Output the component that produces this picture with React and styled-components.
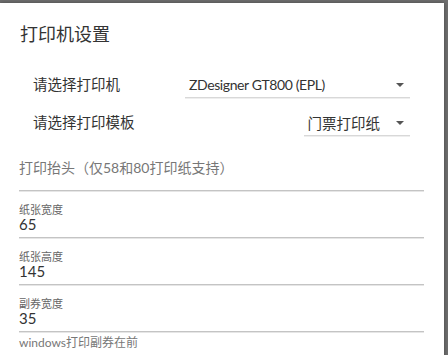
import React from 'react'
import styled, { createGlobalStyle } from 'styled-components'

const Global = createGlobalStyle`
html, body {
  margin: 0;
  padding: 0;
  background: #6e6e6e;
  overflow: hidden;
}
body {
  font-family: "Lato", "Noto Sans CJK SC", sans-serif;
}
`

const Backdrop = styled.div`
width: 448px;
height: 355px;
padding-top: 3px;
box-sizing: border-box;
overflow: hidden;
`

const Dialog = styled.div`
width: 444px;
height: 400px;
background: #fff;
box-shadow: 0 0 4px rgba(0, 0, 0, 0.35);
box-sizing: border-box;
padding: 19px 0 0;
`

const Title = styled.h2`
margin: 0 0 26px 20px;
font-size: 18px;
line-height: 24px;
font-weight: 400;
color: #333;
`

const Row = styled.div`
display: flex;
align-items: flex-end;
height: 26px;
padding: 0 34px 0 33px;
margin-bottom: 12px;
`

const RowLabel = styled.div`
width: 152px;
flex-shrink: 0;
font-size: 14.5px;
line-height: 22px;
padding-bottom: 2px;
color: #333;
`

const SelectWrap = styled.div`
flex: 1;
display: flex;
justify-content: flex-end;
`

const Select = styled.div`
display: flex;
align-items: center;
justify-content: space-between;
width: ${(props) => (props.full ? '100%' : 'auto')};
height: 26px;
box-sizing: border-box;
padding: 2px 6px 2px 4px;
border-bottom: 1px solid #d8d8d8;
box-shadow: 0 1px 0 #eee;
font-size: ${(props) => (props.full ? '14px' : '14.5px')};
letter-spacing: ${(props) => (props.full ? '-0.4px' : '0')};
color: #333;
`

const Arrow = styled.span`
display: inline-block;
margin-left: 16px;
width: 0;
height: 0;
border-left: 4px solid transparent;
border-right: 4px solid transparent;
border-top: 4px solid #555;
`

const Fields = styled.div`
padding: 0 20px 0 19px;
`

const HeaderField = styled.div`
font-size: 14px;
line-height: 22px;
color: #777;
padding: 9px 0 11px;
border-bottom: 1px solid #c4c4c4;
box-shadow: 0 1px 0 #e6e6e6;
`

const Field = styled.div`
padding: 13px 0 5px;
border-bottom: 1px solid #c4c4c4;
box-shadow: 0 1px 0 #e6e6e6;
`

const FieldLabel = styled.div`
font-size: 11px;
line-height: 12px;
color: #666;
`

const FieldValue = styled.div`
font-size: 15px;
line-height: 16px;
color: #333;
`

const Note = styled.div`
padding-top: 3px;
font-size: 12px;
line-height: 16px;
color: #777;
`

const fields = [
  { label: '纸张宽度', value: '65' },
  { label: '纸张高度', value: '145' },
  { label: '副券宽度', value: '35' },
]

const App = () => {
  return (
    <>
      <Global />
      <Backdrop>
        <Dialog>
          <Title>打印机设置</Title>
          <Row>
            <RowLabel>请选择打印机</RowLabel>
            <SelectWrap>
              <Select full>
                ZDesigner GT800 (EPL)
                <Arrow />
              </Select>
            </SelectWrap>
          </Row>
          <Row>
            <RowLabel>请选择打印模板</RowLabel>
            <SelectWrap>
              <Select>
                门票打印纸
                <Arrow />
              </Select>
            </SelectWrap>
          </Row>
          <Fields>
            <HeaderField>打印抬头（仅58和80打印纸支持）</HeaderField>
            {fields.map((f) => (
              <Field key={f.label}>
                <FieldLabel>{f.label}</FieldLabel>
                <FieldValue>{f.value}</FieldValue>
              </Field>
            ))}
            <Note>windows打印副券在前</Note>
          </Fields>
        </Dialog>
      </Backdrop>
    </>
  )
}

export default App
